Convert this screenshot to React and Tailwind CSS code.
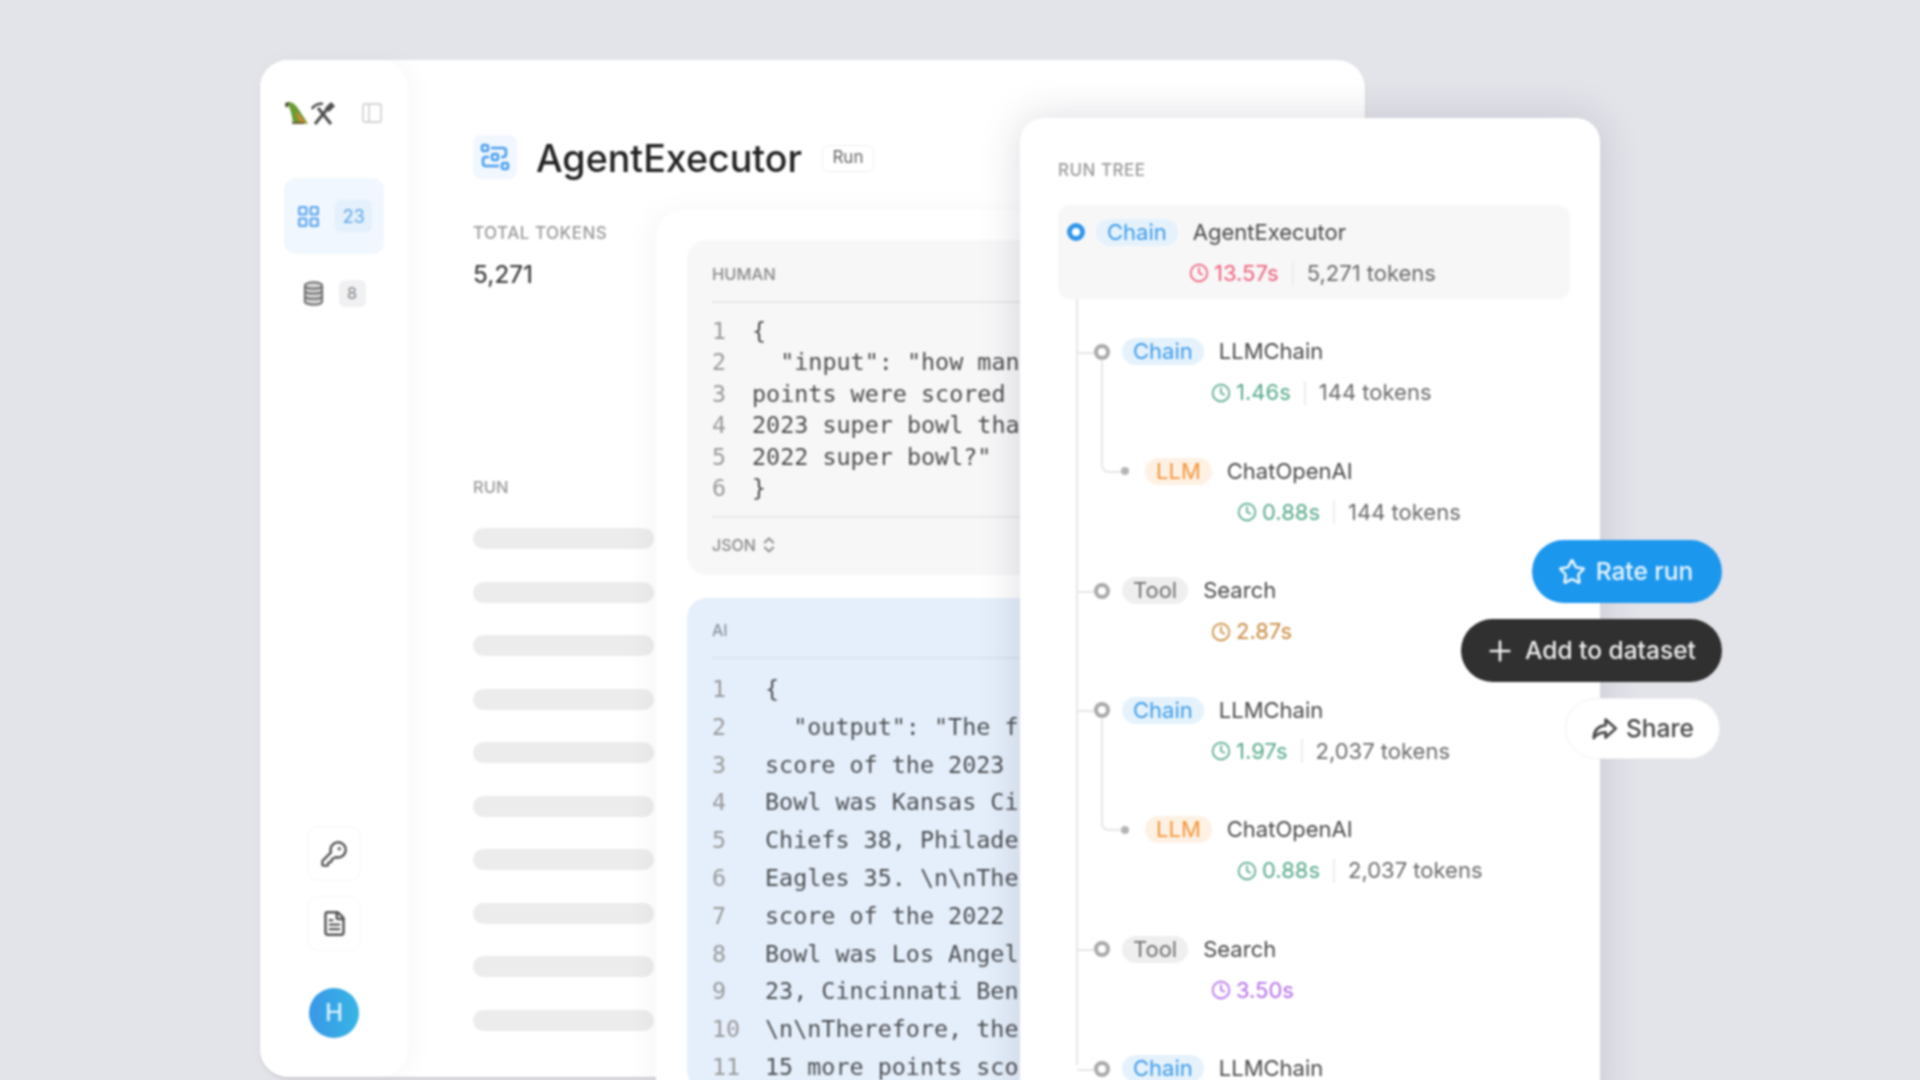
import React from 'react'
import { ChevronsUpDown, Clock, FileText, KeyRound, LayoutGrid, PanelLeft, Plus, Star } from 'lucide-react'

const humanLines = ['{', '  "input": "how man', 'points were scored', '2023 super bowl tha', '2022 super bowl?"', '}']

const aiLines = [
  '{',
  '  "output": "The f',
  'score of the 2023',
  'Bowl was Kansas Ci',
  'Chiefs 38, Philade',
  'Eagles 35. \\n\\nThe',
  'score of the 2022',
  'Bowl was Los Angel',
  '23, Cincinnati Ben',
  '\\n\\nTherefore, the',
  '15 more points sco',
]

const pillStyles = {
  Chain: 'bg-[#e5f2fc] text-[#3d9be9]',
  LLM: 'bg-[#fdf1e3] text-[#f3963a]',
  Tool: 'bg-[#efefef] text-[#6f6f6f]',
}

const timeStyles = {
  red: 'text-[#ee6079]',
  green: 'text-[#57a98a]',
  orange: 'text-[#c98b3f]',
  purple: 'text-[#b46ee9]',
}

const runs = [
  { type: 'Chain', name: 'AgentExecutor', time: '13.57s', color: 'red', tokens: '5,271 tokens', depth: 0 },
  { type: 'Chain', name: 'LLMChain', time: '1.46s', color: 'green', tokens: '144 tokens', depth: 1, parent: true },
  { type: 'LLM', name: 'ChatOpenAI', time: '0.88s', color: 'green', tokens: '144 tokens', depth: 2 },
  { type: 'Tool', name: 'Search', time: '2.87s', color: 'orange', depth: 1 },
  { type: 'Chain', name: 'LLMChain', time: '1.97s', color: 'green', tokens: '2,037 tokens', depth: 1, parent: true },
  { type: 'LLM', name: 'ChatOpenAI', time: '0.88s', color: 'green', tokens: '2,037 tokens', depth: 2 },
  { type: 'Tool', name: 'Search', time: '3.50s', color: 'purple', depth: 1 },
  { type: 'Chain', name: 'LLMChain', depth: 1 },
]

const skeletons = [0, 1, 2, 3, 4, 5, 6, 7, 8, 9]

function LogoParrot() {
  return (
    <svg viewBox="0 0 26 26" className="w-[26px] h-[26px]">
      <path d="M3 3c2-2 5-1 7 1 3 2 5 6 7 9l4 6 3 5-7-1H9C8 17 7 11 5 7z" fill="#6a9c35" />
      <path d="M12 12c3 2 6 5 8 8l3 3-7-1c-2-3-4-6-4-10z" fill="#c98a2e" />
      <path d="M1 4c1-2 3-2 4-1L3 8C2 7 1 6 1 4z" fill="#4a4a32" />
      <path d="M8 22h12v2H8z" fill="#6b5a3a" />
    </svg>
  )
}

function LogoTools() {
  return (
    <svg viewBox="0 0 26 26" className="w-[26px] h-[26px]" fill="none" stroke="#4f4f4f" strokeWidth="3">
      <path d="M5 24L18 8" />
      <path d="M21 24L8 8" />
      <path d="M2 9c2-4 7-6 11-5" strokeWidth="2.6" />
      <path d="M16 8l5-5 3 3-5 5z" fill="#4f4f4f" strokeWidth="1.5" />
    </svg>
  )
}

function RunIcon() {
  return (
    <svg viewBox="0 0 30 30" className="w-[30px] h-[30px]" fill="none" stroke="#4b9fee" strokeWidth="2.6" strokeLinejoin="round">
      <rect x="2" y="3" width="6" height="6" rx="2" />
      <rect x="12" y="12" width="6" height="6" rx="2" />
      <rect x="22" y="21" width="6" height="6" rx="2" />
      <path d="M11 6h12c2 0 3 1 3 3v3c0 2-1 3-3 3h-2M9 15H6c-2 0-3 1-3 3v3c0 2 1 3 3 3h13" />
    </svg>
  )
}

function ShareIcon() {
  return (
    <svg viewBox="0 0 24 24" className="w-[27px] h-[27px]" fill="none" stroke="#4a4a4a" strokeWidth="2.4" strokeLinejoin="round" strokeLinecap="round">
      <path d="M13 4l9 8-9 8v-4.5c-5 0-8 1.5-10.5 5 0-6.5 3.5-10.5 10.5-11.500z" />
    </svg>
  )
}

function StackIcon() {
  return (
    <svg viewBox="0 0 22 26" className="w-[21px] h-[25px]" fill="none" stroke="#707070" strokeWidth="2.2">
      <path d="M2 5c0-5 18-5 18 0v16c0 5-18 5-18 0z" fill="#d6d6d6" />
      <path d="M2 5c0 4 18 4 18 0M2 10c0 4 18 4 18 0M2 15.5c0 4 18 4 18 0" />
    </svg>
  )
}

function Sidebar() {
  return (
    <div className="w-[148px] shrink-0 h-full rounded-[28px] bg-white shadow-[6px_0_24px_rgba(0,0,0,0.03)] flex flex-col items-center pt-[40px] pb-[39px]">
      <div className="w-[100px] flex items-center justify-between h-[26px]">
        <div className="flex">
          <LogoParrot />
          <LogoTools />
        </div>
        <PanelLeft className="w-[24px] h-[24px] text-[#d4d4d8]" strokeWidth={1.8} />
      </div>
      <div className="mt-[52px] w-[100px] h-[76px] rounded-xl bg-[#f0f7fe] flex items-center justify-center gap-[14px]">
        <LayoutGrid className="w-[25px] h-[25px] text-[#61a8ef]" strokeWidth={2.2} />
        <span className="w-[37px] h-[32px] rounded-md bg-[#e4f0fb] flex items-center justify-center text-[18px] text-[#63a9ec]">23</span>
      </div>
      <div className="mt-[24px] w-[100px] h-[30px] flex items-center justify-center gap-[15px]">
        <StackIcon />
        <span className="w-[27px] h-[27px] rounded-md bg-[#f1f1f4] flex items-center justify-center text-[16px] text-[#888]">8</span>
      </div>
      <div className="mt-auto flex flex-col items-center">
        <div className="w-[54px] h-[55px] rounded-xl border border-[#f6f6f7] flex items-center justify-center">
          <KeyRound className="w-[28px] h-[28px] text-[#555]" strokeWidth={2} />
        </div>
        <div className="mt-[15px] w-[54px] h-[55px] rounded-xl border border-[#f6f6f7] flex items-center justify-center">
          <FileText className="w-[27px] h-[27px] text-[#555]" strokeWidth={2.2} />
        </div>
        <div className="mt-[37px] w-[50px] h-[50px] rounded-full bg-gradient-to-r from-[#3a97e8] to-[#36b5e4] flex items-center justify-center text-[24px] font-medium text-[#d9f1fb]">H</div>
      </div>
    </div>
  )
}

function CodeBlock({ lines, rowClass, textClass }) {
  return (
    <div className="font-['DejaVu_Sans_Mono',monospace] text-[23.4px]">
      {lines.map((line, i) => (
        <div key={i} className={`flex whitespace-pre ${rowClass}`}>
          <span className="w-[40px] shrink-0 text-[#9a9a9a]">{i + 1}</span>
          <span className={textClass}>{line}</span>
        </div>
      ))}
    </div>
  )
}

function MessagesPanel() {
  return (
    <div className="absolute left-[396px] top-[150px] w-[420px] h-[880px] bg-white rounded-tl-[28px] shadow-[-8px_0_28px_rgba(0,0,0,0.035)] pl-[31px] pt-[30px]">
      <div className="w-[389px] h-[335px] rounded-l-[20px] bg-[#f7f7f8] pl-[25px] pt-[24px]">
        <div className="text-[16.5px] leading-[20px] font-medium text-[#8a8a8a]">HUMAN</div>
        <div className="h-[2px] bg-[#e8e8e9] mt-[17px] mb-[13px]"></div>
        <CodeBlock lines={humanLines} rowClass="h-[31.4px] leading-[31.4px]" textClass="text-[#4d4d4d]" />
        <div className="h-[2px] bg-[#e8e8e9] mt-[12px]"></div>
        <div className="mt-[15px] flex items-center gap-[3px] text-[16px] leading-[24px] font-medium text-[#8a8a8a]">
          JSON
          <ChevronsUpDown className="w-[20px] h-[22px] text-[#8a8a8a]" strokeWidth={2.2} />
        </div>
      </div>
      <div className="mt-[23px] w-[389px] h-[492px] rounded-l-[20px] bg-[#e5effb] pl-[25px] pt-[22px]">
        <div className="text-[16px] leading-[20px] font-medium text-[#8a95a3]">AI</div>
        <div className="h-[2px] bg-[#d9e4f0] mt-[17px] mb-[12px]"></div>
        <CodeBlock lines={aiLines} rowClass="h-[37.8px] leading-[37.8px]" textClass="text-[#4d4f52] pl-[13px]" />
      </div>
    </div>
  )
}

function TreeRow({ run }) {
  const indent = run.depth === 0 ? 'pl-[9px]' : run.depth === 1 ? 'pl-[36px]' : 'pl-[63px]'
  const metaIndent = run.depth === 0 ? 'pl-[131px]' : run.depth === 1 ? 'pl-[153px]' : 'pl-[179px]'
  const dot =
    run.depth === 0
      ? 'w-[18px] h-[18px] border-[5px] border-[#2f96ea] bg-white mr-[11px]'
      : run.depth === 1
        ? 'w-[16px] h-[16px] border-[4px] border-[#a9a9a9] bg-white mr-[12px]'
        : 'w-[8px] h-[8px] bg-[#b5b5b5] mr-[16px]'

  return (
    <div className="relative h-[119.5px]">
      {run.depth === 0 && <div className="absolute inset-x-0 top-0 h-[94px] rounded-xl bg-[#f7f7f8]"></div>}
      {run.depth === 1 && <div className="absolute left-[19px] top-[27px] w-[17px] h-[2px] bg-[#e6e6e6]"></div>}
      {run.parent && <div className="absolute left-[43px] top-[36px] w-[20px] h-[112px] border-l-2 border-b-2 border-[#e6e6e6] rounded-bl-lg"></div>}
      <div className={`relative flex items-center h-[26px] translate-y-[14px] ${indent}`}>
        <span className={`rounded-full shrink-0 ${dot}`}></span>
        <span className={`h-[27px] px-[11px] rounded-full flex items-center text-[22px] ${pillStyles[run.type]}`}>{run.type}</span>
        <span className="ml-[15px] text-[22px] text-[#4a4a4a]">{run.name}</span>
      </div>
      {run.time && (
        <div className={`relative flex items-center h-[28px] translate-y-[28px] text-[22px] ${metaIndent}`}>
          <Clock className={`w-[20px] h-[20px] mr-[5px] ${timeStyles[run.color]}`} strokeWidth={2} />
          <span className={timeStyles[run.color]}>{run.time}</span>
          {run.tokens && <span className="w-[2px] h-[24px] bg-[#ececec] mx-[13px]"></span>}
          {run.tokens && <span className="text-[#6b6b6b]">{run.tokens}</span>}
        </div>
      )}
    </div>
  )
}

function RunTree() {
  return (
    <div className="absolute left-[1020px] top-[118px] w-[580px] h-[1000px] rounded-[24px] bg-white shadow-[0_0_40px_rgba(40,40,70,0.17)] pl-[38px] pr-[30px] pt-[42px]">
      <div className="text-[17px] leading-[20px] font-medium tracking-[0.5px] text-[#9a9a9a]">RUN TREE</div>
      <div className="relative mt-[25px]">
        <div className="absolute left-[18px] top-[40px] w-[2px] h-[820px] bg-[#e6e6e6]"></div>
        {runs.map((run, i) => (
          <TreeRow key={i} run={run} />
        ))}
      </div>
    </div>
  )
}

function ActionButtons() {
  return (
    <div className="absolute left-[1461px] top-[540px] w-[261px] flex flex-col items-end text-[24.5px] font-medium">
      <button className="w-[190px] h-[63px] rounded-full bg-[#1c97ee] text-[#e8f5fe] flex items-center justify-center gap-[10px]">
        <Star className="w-[28px] h-[28px] -ml-[3px]" strokeWidth={2.2} />
        Rate run
      </button>
      <button className="mt-[16px] w-[261px] h-[63px] rounded-full bg-[#303030] text-[#ececec] flex items-center justify-center gap-[9px]">
        <Plus className="w-[32px] h-[32px] -ml-[3px]" strokeWidth={2} />
        Add to dataset
      </button>
      <button className="mt-[16px] mr-[2px] w-[155px] h-[61px] rounded-full bg-white border border-[#f0f0f0] text-[#4a4a4a] flex items-center justify-center gap-[8px]">
        <ShareIcon />
        Share
      </button>
    </div>
  )
}

export default function App() {
  return (
    <div className="w-[1920px] h-[1080px] overflow-hidden bg-[#e3e4ea] font-['Inter',sans-serif]">
      <div className="relative w-[1920px] h-[1080px] blur-[0.9px]">
        <div className="absolute left-[260px] top-[60px] w-[1105px] h-[1017px] rounded-[28px] bg-white shadow-[0_2px_3px_rgba(0,0,0,0.12)] flex">
          <Sidebar />
          <div className="flex-1 pl-[65px] pt-[75px]">
            <div className="flex items-center h-[44px]">
              <div className="w-[44px] h-[44px] rounded-lg bg-[#f1f7fe] flex items-center justify-center">
                <RunIcon />
              </div>
              <h1 className="ml-[19px] translate-y-[2px] text-[37.6px] font-medium text-[#222]">AgentExecutor</h1>
              <span className="ml-[20px] translate-y-[1px] w-[52px] h-[27px] rounded-md border border-[#eeeeee] flex items-center justify-center text-[17px] text-[#666]">Run</span>
            </div>
            <div className="mt-[44px] text-[17px] leading-[20px] font-medium tracking-[0.5px] text-[#9a9a9a]">TOTAL TOKENS</div>
            <div className="mt-[17px] text-[24px] leading-[30px] font-medium text-[#444]">5,271</div>
            <div className="mt-[187px] text-[16.5px] leading-[20px] font-medium text-[#9a9a9a]">RUN</div>
            <div className="mt-[31px] flex flex-col gap-[32.5px]">
              {skeletons.map((n) => (
                <div key={n} className="w-[181px] h-[21px] rounded-full bg-[#ececec]"></div>
              ))}
            </div>
          </div>
          <MessagesPanel />
        </div>
        <RunTree />
        <ActionButtons />
      </div>
    </div>
  )
}
